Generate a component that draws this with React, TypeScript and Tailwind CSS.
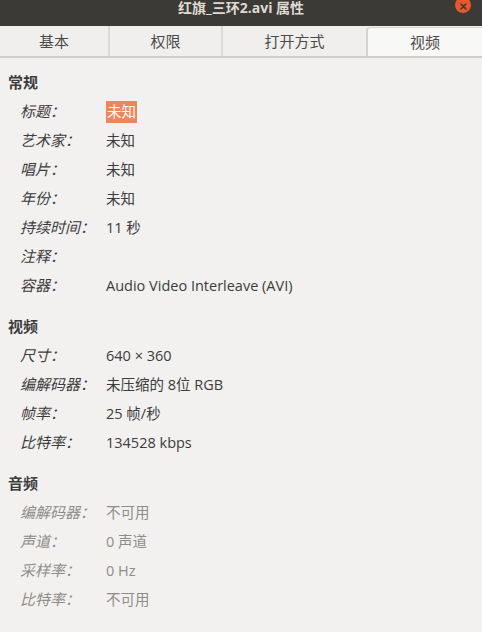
import React from "react"

type Row = { label: string; value: string; highlight?: boolean }

const general: Row[] = [
  { label: "标题：", value: "未知", highlight: true },
  { label: "艺术家：", value: "未知" },
  { label: "唱片：", value: "未知" },
  { label: "年份：", value: "未知" },
  { label: "持续时间：", value: "11 秒" },
  { label: "注释：", value: "" },
  { label: "容器：", value: "Audio Video Interleave (AVI)" },
]

const video: Row[] = [
  { label: "尺寸：", value: "640 × 360" },
  { label: "编解码器：", value: "未压缩的 8位 RGB" },
  { label: "帧率：", value: "25 帧/秒" },
  { label: "比特率：", value: "134528 kbps" },
]

const audio: Row[] = [
  { label: "编解码器：", value: "不可用" },
  { label: "声道：", value: "0 声道" },
  { label: "采样率：", value: "0 Hz" },
  { label: "比特率：", value: "不可用" },
]

const tabs = [
  { name: "基本", w: "w-[108px]" },
  { name: "权限", w: "w-[113px]" },
  { name: "打开方式", w: "w-[145px]" },
]

function Section({ title, rows, disabled }: { title: string; rows: Row[]; disabled?: boolean }) {
  return (
    <div className="flex flex-col">
      <div className="h-5 pl-2 text-[15px] font-bold leading-5 text-[#3c3c3c]">{title}</div>
      <div className="mt-[5px] flex flex-col">
        {rows.map((r, i) => (
          <div
            key={i}
            className={`flex h-[29px] items-center text-[14.5px] ${disabled ? "text-[#8e8c89]" : "text-[#3c3c3c]"}`}
          >
            <div className="w-[106px] pl-5 text-[15px] italic">{r.label}</div>
            {r.highlight ? (
              <span className="bg-[#f0845a] px-[1px] leading-[22px] text-white">{r.value}</span>
            ) : (
              <span>{r.value}</span>
            )}
          </div>
        ))}
      </div>
    </div>
  )
}

export default function App() {
  return (
    <div
      className="flex h-[632px] w-[482px] flex-col overflow-hidden bg-[#f2f1f0]"
      style={{ fontFamily: '"Open Sans", "Noto Sans CJK SC", sans-serif' }}
    >
      {/* title bar */}
      <div className="relative h-[26px] shrink-0 bg-[#3b3a36]">
        <div className="text-center text-[14px] font-bold leading-[16px] text-[#dfdbd2]">红旗_三环2.avi 属性</div>
        {/* close button */}
        <div className="absolute -top-[3px] left-[455px] flex h-[16px] w-[16px] items-center justify-center rounded-full bg-[#e9572a]">
          <svg width="7" height="7" viewBox="0 0 7 7" className="mt-[2px]">
            <path d="M1 1 L6 6 M6 1 L1 6" stroke="#3b3a36" strokeWidth="1.6" strokeLinecap="round" />
          </svg>
        </div>
      </div>

      {/* tabs */}
      <div className="flex h-[32px] shrink-0 border-b-2 border-[#cfcdca] bg-[#f0efed]">
        {tabs.map((t, i) => (
          <div
            key={t.name}
            className={`flex ${t.w} items-center justify-center text-[15px] text-[#4a4a4a] ${i > 0 ? "border-l-2 border-[#dcdad7]" : ""}`}
          >
            {t.name}
          </div>
        ))}
        <div className="mt-[1px] flex flex-1 items-center justify-center rounded-tl-[4px] border-l-2 border-t border-[#d6d4d1] bg-[#f8f8f7] text-[15px] text-[#4a4a4a]">
          视频
        </div>
      </div>

      {/* content */}
      <div className="flex flex-col gap-4 pt-[14px]">
        <Section title="常规" rows={general} />
        <Section title="视频" rows={video} />
        <Section title="音频" rows={audio} disabled />
      </div>
    </div>
  )
}
